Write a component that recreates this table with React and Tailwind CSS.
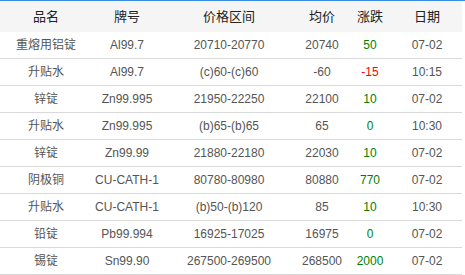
import React from 'react';

const rows = [
  { name: '重熔用铝锭', brand: 'Al99.7', range: '20710-20770', avg: '20740', change: '50', date: '07-02' },
  { name: '升贴水', brand: 'Al99.7', range: '(c)60-(c)60', avg: '-60', change: '-15', date: '10:15' },
  { name: '锌锭', brand: 'Zn99.995', range: '21950-22250', avg: '22100', change: '10', date: '07-02' },
  { name: '升贴水', brand: 'Zn99.995', range: '(b)65-(b)65', avg: '65', change: '0', date: '10:30' },
  { name: '锌锭', brand: 'Zn99.99', range: '21880-22180', avg: '22030', change: '10', date: '07-02' },
  { name: '阴极铜', brand: 'CU-CATH-1', range: '80780-80980', avg: '80880', change: '770', date: '07-02' },
  { name: '升贴水', brand: 'CU-CATH-1', range: '(b)50-(b)120', avg: '85', change: '10', date: '10:30' },
  { name: '铅锭', brand: 'Pb99.994', range: '16925-17025', avg: '16975', change: '0', date: '07-02' },
  { name: '锡锭', brand: 'Sn99.90', range: '267500-269500', avg: '268500', change: '2000', date: '07-02' },
];

const cols = 'grid grid-cols-[92px_70px_134px_52px_44px_70px] w-[462px]';

function App() {
  return (
    <div
      className="w-[465px] h-[275px] bg-white overflow-hidden border-t border-[#3b8de0]"
      style={{ fontFamily: '"Liberation Sans", Arial, "Noto Sans CJK SC", sans-serif' }}
    >
      <div className={`${cols} h-[31px] items-center bg-[#f5f5f5] text-[13px] text-[#222] text-center`}>
        <div>品名</div>
        <div>牌号</div>
        <div>价格区间</div>
        <div>均价</div>
        <div>涨跌</div>
        <div>日期</div>
      </div>
      {rows.map((r, i) => (
        <div
          key={i}
          className={`${cols} h-[27px] items-center border-b border-[#d9d9d9] text-[12px] text-[#555] text-center`}
        >
          <div>{r.name}</div>
          <div>{r.brand}</div>
          <div>{r.range}</div>
          <div>{r.avg}</div>
          <div className={r.change.startsWith('-') ? 'text-[#ff0000]' : 'text-[#008000]'}>{r.change}</div>
          <div>{r.date}</div>
        </div>
      ))}
    </div>
  );
}

export default App;
